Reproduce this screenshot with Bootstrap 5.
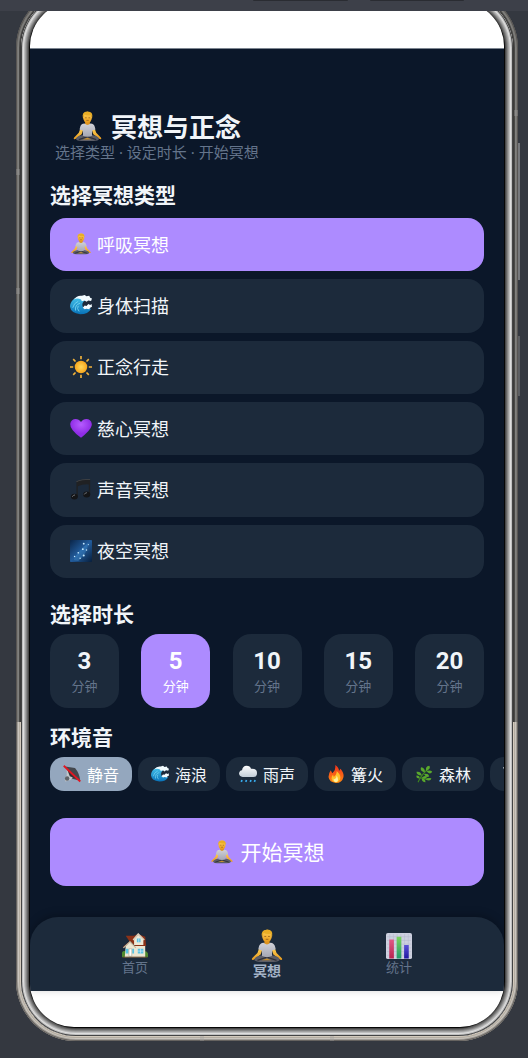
<!DOCTYPE html>
<html lang="zh-CN">
<head>
<meta charset="utf-8">
<meta name="viewport" content="width=device-width, initial-scale=1">
<title>冥想与正念</title>
<link href="https://cdn.jsdelivr.net/npm/bootstrap@5.3.0/dist/css/bootstrap.min.css" rel="stylesheet">
<style>
  :root { --night:#0b1729; --panel:#1c2a3b; --violet:#ad8bff; --ink:#f1f5f9; --muted:#64748b; }
  body { background:#343840; color:var(--ink); font-family:"Noto Sans CJK SC",sans-serif; }
  button, a { font-family:inherit; }
  .toolbar { height:11px; background:#3d4049; padding:0 64px 0 253px; gap:22px; }
  .toolbar span { flex:1; height:1px; background:#2a2c32; border-radius:0 0 4px 4px; }
  .stage { padding:0 10px 17px 16px; }
  /* device shell: outer band, polished ring, glass */
  .shell { margin-top:-23px; padding:5px; border-radius:60px;
    background:linear-gradient(#3b3b3b 0 734px,#d3cabd 734px);
    box-shadow:inset 0 0 0 1px rgba(70,68,66,.65), inset 0 0 0 2px rgba(110,108,104,.45), inset 0 0 0 3px rgba(255,255,255,.3), inset 0 0 0 4px rgba(110,105,98,.3); }
  .ring { padding:9px; border-radius:55px; background:#999;
    box-shadow:inset 0 0 0 1px #444, inset 0 0 0 2px #c0c0c0, inset 0 0 0 3px #dedede, inset 0 0 0 4px #bdbdbd, inset 0 0 0 5px #a0a0a0, inset 0 0 0 6px #848484, inset 0 0 0 7px #666, inset 0 0 0 8px #484848, inset 0 0 0 10px #060606; }
  .glass { border-radius:44px; background:#fff; overflow:hidden; padding:46px 0 36px; }
  .seam { width:4px; height:6px; background:rgba(160,160,160,.35); }
  .seam-l1 { top:181px; left:0; } .seam-l2 { top:300px; left:0; } .seam-r1 { top:122px; right:0; }
  .seam-b1 { bottom:0; left:184px; height:5px; } .seam-b2 { bottom:0; right:184px; height:5px; }
  .side-key { right:-2px; top:155px; width:2px; height:137px; background:#77797d; }
  .side-key-low { top:348px; height:60px; background:#5d5f63; }
  .app-view { background:var(--night); border-top:1px solid #7c8590; padding-top:61px; }
  .app-main { padding:0 20px; }
  .app-title { font-size:26px; line-height:32px; padding-left:22px; gap:8px; font-weight:700; }
  .app-sub { font-family:"Noto Sans","Noto Sans CJK SC",sans-serif; font-size:15px; line-height:20px; padding-left:5px; margin-bottom:19px; color:var(--muted); }
  .sec-title { font-size:21px; line-height:26px; font-weight:700; margin-bottom:8px; }
  .type-list { grid-auto-rows:1fr; gap:8px; min-height:360px; margin:11px 0 22px; }
  .tile { border:0; color:var(--ink); background:var(--panel); }
  .tile.chosen { background:var(--violet); color:#fff; }
  .type-tile { border-radius:16px; padding:0 20px 1px; gap:5px; font-size:18px; }
  .times { margin-bottom:15px; }
  .time-tile { width:69px; height:74px; border-radius:18px; padding:0; }
  .time-tile b { font-family:Roboto,sans-serif; font-size:24px; line-height:30px; }
  .time-tile small { font-size:13px; line-height:20px; color:var(--muted); }
  .time-tile.chosen small { color:#fff; }
  .sounds { gap:6px; margin-right:-20px; overflow-x:auto; scrollbar-width:none; }
  .sounds::-webkit-scrollbar { display:none; }
  .sound-tile { flex:0 0 82px; height:34px; border-radius:14px; padding:0 0 1px; gap:6px; font-size:16px; line-height:20px; }
  .sound-tile.chosen { background:#94a7be; }
  .sound-tile.icon-first { padding-left:13px; }
  .start { height:68px; border-radius:16px; margin:27px 0 31px; padding:0 0 1px; gap:7px; font-size:21px; }
  .tabs { background:var(--panel); border-radius:28px 28px 0 0; height:74px; padding:0 39px; box-shadow:0 -2px 8px rgba(0,0,0,.25); }
  .tabs a { font-size:13px; line-height:15px; color:var(--muted); padding-top:16px; }
  .tabs a.here { font-size:14px; font-weight:700; color:#a5b4c8; padding-top:12px; }
  .i18 { width:18px; height:18px; } .i22 { width:22px; height:22px; } .i24 { width:24px; height:24px; }
  .i26 { width:26px; height:26px; } .i30 { width:31px; height:31px; } .i34 { width:34px; height:34px; }
  svg { flex:none; }
</style>
</head>
<body>
<svg width="0" height="0" class="position-absolute" aria-hidden="true">
  <defs>
    <linearGradient id="gSkin" x2="0" y2="1"><stop stop-color="#ffd35a"/><stop offset="1" stop-color="#e89a1c"/></linearGradient>
    <linearGradient id="gShirt" x2="0" y2="1"><stop stop-color="#d0d1d8"/><stop offset="1" stop-color="#a5a7b2"/></linearGradient>
    <linearGradient id="gWave" x2="0" y2="1"><stop stop-color="#48c6ee"/><stop offset="1" stop-color="#0872b8"/></linearGradient>
    <radialGradient id="gSun"><stop stop-color="#ffd75a"/><stop offset="1" stop-color="#f7a51c"/></radialGradient>
    <radialGradient id="gHeart" cy=".3"><stop stop-color="#b65cff"/><stop offset="1" stop-color="#8f2ce6"/></radialGradient>
    <linearGradient id="gSky" x2="1" y2="1"><stop stop-color="#0a2548"/><stop offset=".5" stop-color="#225c9c"/><stop offset="1" stop-color="#071e3c"/></linearGradient>
    <linearGradient id="gFire" x2="0" y2="1"><stop stop-color="#f0301c"/><stop offset="1" stop-color="#ff8a12"/></linearGradient>
    <linearGradient id="gCloud" x2="0" y2="1"><stop stop-color="#fff"/><stop offset="1" stop-color="#c3cdd8"/></linearGradient>
    <linearGradient id="gRed" x2="0" y2="1"><stop stop-color="#e05a86"/><stop offset="1" stop-color="#b8234f"/></linearGradient>
    <linearGradient id="gGreen" x2="0" y2="1"><stop stop-color="#7ad65a"/><stop offset="1" stop-color="#229a6c"/></linearGradient>
    <linearGradient id="gBlue" x2="0" y2="1"><stop stop-color="#5a50d8"/><stop offset="1" stop-color="#2018a0"/></linearGradient>
  </defs>
  <symbol id="yogi" viewBox="0 0 32 32">
    <path d="M9 17 7 22.500 2 27.500Q1 29.500 3.500 29L10 24 12 18ZM23 17 25 22.500 30 27.500Q31 29.500 28.500 29L22 24 20 18Z" fill="url(#gSkin)"/>
    <path d="M4 29Q4.500 26 10 25L16 24 22 25Q27.500 26 28 29 27 31.300 21 31H11Q5 31.300 4 29Z" fill="#5c5d66"/>
    <path d="M7 29.500L16 26.500 25 29.500" fill="none" stroke="#303138" stroke-width="1.200"/>
    <path d="M11 29.300L16 27.700 20 29.300Z" fill="#c8902c"/>
    <path d="M13.500 10h5v4.500q-2.500 2-5 0Z" fill="#dd9420"/>
    <path d="M13 13Q9 13.200 8.300 17L7.800 19 11.200 20.200 11.300 25.500Q16 27.500 20.700 25.500L20.800 20.200 24.200 19 23.700 17Q23 13.200 19 13 16 16 13 13Z" fill="url(#gShirt)"/>
    <ellipse cx="16" cy="6.500" rx="4.600" ry="5.700" fill="url(#gSkin)"/>
    <path d="M11.200 7Q10 1 15.500.6 22 .2 20.900 7L19.700 4.500Q15 5 13 3.700 12 5 11.200 7Z" fill="#e9ad25"/>
    <path d="M13.500 7h1.700M17 7h1.700M14.800 9.700h2.500" stroke="#8b5715" stroke-width=".7"/>
  </symbol>
  <symbol id="wave" viewBox="0 0 24 24">
    <path d="M0 14C0 7 6 2 14 3l8 3q-7 0-8.500 4.500Q13 15 17 15.500L23 16q-3 6-12 6Q1 21 0 14Z" fill="url(#gWave)"/>
    <path d="M3 15Q4 10 9 8M6 18Q5 12 11 10M10 19Q7 16 9 13" fill="none" stroke="#7bd8f2" stroke-width=".9"/>
    <path d="M4 6Q8 1 13 2l3-1 2 1.500 3-.5 1 2 2 1-1 2.500-3-.5-2 1.500-2-1.500-3 1-1-2Q8 4 4 6ZM14 15l2-2.500 2 .5 2-2 2 1 1.500-1 .5 3-2 1-1 1.500-3-.5-2 .5Z" fill="#f2fbff"/>
  </symbol>
  <symbol id="sun" viewBox="0 0 24 24">
    <path d="M12 0v3.500M12 20.500V24M0 12h3.500M20.500 12H24M3.500 3.500 6 6M18 18l2.500 2.500M20.500 3.500 18 6M6 18l-2.500 2.500" stroke="#f2b33c" stroke-width="1.800"/>
    <circle cx="12" cy="12" r="6.800" fill="url(#gSun)"/>
  </symbol>
  <symbol id="heart" viewBox="0 0 24 24"><path d="M12 22.500Q0 14 .2 7.500C1 1 9 .5 12 5.500 15 .5 23 1 23.800 7.500 24 14 12 22.500 12 22.500Z" fill="url(#gHeart)"/></symbol>
  <symbol id="note" viewBox="0 0 24 24">
    <path d="M7 3.500Q12 1 22 1v17h-1.500V7Q14 6.500 8.500 9v11H7Z" fill="#202123"/><path d="M7 3.500Q12 1 22 1v1Q12 2 7 4.500Z" fill="#45484c"/>
    <ellipse cx="4.800" cy="20.300" rx="3.800" ry="3.200" fill="#141517"/><ellipse cx="18.200" cy="18" rx="3.900" ry="3.200" fill="#141517"/>
    <path d="M2.500 20.500q1-2 3-2M15.500 18q1-2 3-2" stroke="#777b80" fill="none"/>
  </symbol>
  <symbol id="galaxy" viewBox="0 0 24 24">
    <rect width="24" height="24" rx="1" fill="url(#gSky)"/>
    <path d="M4 22Q8 12 20 3 19 15 9 23Z" fill="#3f88c7" opacity=".45"/>
    <g fill="#c5eaff"><circle cx="15" cy="4" r="1"/><circle cx="14" cy="10" r="1"/><circle cx="18" cy="11" r=".8"/><circle cx="9" cy="14" r=".9"/><circle cx="15" cy="17" r="1.100"/><circle cx="11" cy="20" r=".8"/><circle cx="5" cy="18" r=".8"/><circle cx="20" cy="5" r=".6"/></g>
  </symbol>
  <symbol id="mute" viewBox="0 0 24 24">
    <path d="M3 2 16 4Q22 11 23 21L11 18Z" fill="#44474d"/>
    <path d="M5 5 13 17 10 20 3 22Q1 17 5 14Z" fill="#c3c6ca"/><path d="M5 4 17 18 9 15Z" fill="#2f3236"/>
    <circle cx="5.500" cy="18" r="3" fill="#5f6368"/>
    <path d="M1 1 23 22" stroke="#e11722" stroke-width="2.400"/>
  </symbol>
  <symbol id="rain" viewBox="0 0 24 24">
    <path d="M5 16Q0 15 0 11q1-4 4-4Q5 1 10 1q5 0 6 4 8-.5 8 5.500 0 5.500-5 5.500Z" fill="url(#gCloud)"/>
    <path d="M4 20l-1 2.500M10 20l-1 2.500M16 20l-1 2.500M21.500 20l-1 2.500" stroke="#39aef0" stroke-width="2.200"/>
  </symbol>
  <symbol id="fire" viewBox="0 0 24 24">
    <path d="M11 0Q16 3 16 8l2-3q5 6 4 11-2 8-10 8Q3 23 2 16 2 11 5 7l2 4Q12 7 11 0Z" fill="url(#gFire)"/>
    <path d="M13 8Q20 15 17 20q-2 3-5 3-5 0-6-5 0-3 2-5l1 3q4-3 4-8Z" fill="#ffc02b"/>
    <path d="M13 14q4 8-1 9-4-1-3-5l1 1q3-2 3-5Z" fill="#fff0a0"/>
  </symbol>
  <symbol id="herb" viewBox="0 0 24 24">
    <path d="M4 23Q9 12 19 4M7 17Q15 20 21 18" fill="none" stroke="#3f8a1d" stroke-width="1.400"/>
    <path d="M15 8Q13 2 19 1q3 3-4 7ZM13 10Q6 8 8 3q6 1 5 7ZM9 14Q2 14 2 9q6-1 7 5ZM15 8q6-2 8 1-3 5-8-1ZM12 12q6-1 7 3-4 3-7-3ZM9 17q4-4 7-1-2 4-7 1ZM6 18Q1 18 2 14q5 0 4 4ZM14 19q4-3 8-1-2 5-8 1ZM9 18q5 0 5 5-5 0-5-5Z" fill="#59a82c"/>
  </symbol>
  <symbol id="bird" viewBox="0 0 24 24"><path d="M0 3h5q6 0 8 7l9 5-8 6H7Q3 15 3 9Z" fill="#e6ebf1"/></symbol>
  <symbol id="house" viewBox="0 0 28 28">
    <path d="M0 21q2-3 5 0v5H0ZM23 21q3-3 5 1v4h-5Z" fill="#4f8a2f"/>
    <path d="M4 14 9 9 14 15V12h11v14H3Z" fill="#ece6d2"/>
    <path d="M1 15 8 9 4 3h9l4-2 8 3 1 10-12 0-5-5-7 7Z" fill="#8c3218"/>
    <path d="M13 13V7l4.500-5L23 7v6Z" fill="#eee8d6"/><path d="M12 7.500 17.500 1 24 7.500" fill="none" stroke="#d8cfba" stroke-width="1.500"/>
    <path d="M1.500 16 8.500 9.500 15 16" fill="none" stroke="#c9bea5" stroke-width="1.300"/>
    <path d="M16 6h4v4h-4ZM17 17h6v5h-6ZM4 17h3v5H4ZM11 17h2v5h-2Z" fill="#58c4e4"/>
    <path d="M18 6v4M20 17v5M17 19.500h6" stroke="#eef" stroke-width=".6"/>
    <path d="M7.500 17h3v8h-3Z" fill="#fff" stroke="#aaa08c" stroke-width=".6"/><path d="M1 26h26" stroke="#65452c"/>
  </symbol>
  <symbol id="chart" viewBox="0 0 28 28">
    <rect width="28" height="28" rx="2" fill="#cdd0df"/>
    <path d="M4 1v26M8 1v26M12 1v26M16 1v26M20 1v26M24 1v26M1 4h26M1 8h26M1 12h26M1 16h26M1 20h26M1 24h26" stroke="#b3b7ca" stroke-width=".5"/>
    <path d="M3.500 7h5v20.500h-5Z" fill="url(#gRed)"/><path d="M11.500 4h5v23.500h-5Z" fill="url(#gGreen)"/><path d="M19.500 13h5v14.500h-5Z" fill="url(#gBlue)"/>
  </symbol>
</svg>

<div class="toolbar d-flex"><span></span><span></span></div>
<div class="stage overflow-hidden">
  <div class="shell position-relative">
    <i class="seam seam-l1 position-absolute"></i><i class="seam seam-l2 position-absolute"></i><i class="seam seam-r1 position-absolute"></i>
    <i class="seam seam-b1 position-absolute"></i><i class="seam seam-b2 position-absolute"></i>
    <i class="side-key position-absolute"></i><i class="side-key side-key-low position-absolute"></i>
    <div class="ring">
      <div class="glass">
        <div class="app-view">
          <main class="app-main">
            <h1 class="app-title d-flex align-items-center mb-0"><svg class="i30"><use href="#yogi"/></svg>冥想与正念</h1>
            <p class="app-sub">选择类型 · 设定时长 · 开始冥想</p>

            <h2 class="sec-title">选择冥想类型</h2>
            <div class="type-list d-grid">
              <button type="button" class="tile type-tile chosen d-flex align-items-center" aria-pressed="true"><svg class="i22"><use href="#yogi"/></svg>呼吸冥想</button>
              <button type="button" class="tile type-tile d-flex align-items-center"><svg class="i22"><use href="#wave"/></svg>身体扫描</button>
              <button type="button" class="tile type-tile d-flex align-items-center"><svg class="i22"><use href="#sun"/></svg>正念行走</button>
              <button type="button" class="tile type-tile d-flex align-items-center"><svg class="i22"><use href="#heart"/></svg>慈心冥想</button>
              <button type="button" class="tile type-tile d-flex align-items-center"><svg class="i22"><use href="#note"/></svg>声音冥想</button>
              <button type="button" class="tile type-tile d-flex align-items-center"><svg class="i22"><use href="#galaxy"/></svg>夜空冥想</button>
            </div>

            <h2 class="sec-title">选择时长</h2>
            <div class="times d-flex justify-content-between">
              <button type="button" class="tile time-tile d-flex flex-column align-items-center justify-content-center"><b>3</b><small>分钟</small></button>
              <button type="button" class="tile time-tile chosen d-flex flex-column align-items-center justify-content-center" aria-pressed="true"><b>5</b><small>分钟</small></button>
              <button type="button" class="tile time-tile d-flex flex-column align-items-center justify-content-center"><b>10</b><small>分钟</small></button>
              <button type="button" class="tile time-tile d-flex flex-column align-items-center justify-content-center"><b>15</b><small>分钟</small></button>
              <button type="button" class="tile time-tile d-flex flex-column align-items-center justify-content-center"><b>20</b><small>分钟</small></button>
            </div>

            <h2 class="sec-title">环境音</h2>
            <div class="sounds d-flex">
              <button type="button" class="tile sound-tile chosen d-flex align-items-center justify-content-center" aria-pressed="true"><svg class="i18"><use href="#mute"/></svg>静音</button>
              <button type="button" class="tile sound-tile d-flex align-items-center justify-content-center"><svg class="i18"><use href="#wave"/></svg>海浪</button>
              <button type="button" class="tile sound-tile d-flex align-items-center justify-content-center"><svg class="i18"><use href="#rain"/></svg>雨声</button>
              <button type="button" class="tile sound-tile d-flex align-items-center justify-content-center"><svg class="i18"><use href="#fire"/></svg>篝火</button>
              <button type="button" class="tile sound-tile d-flex align-items-center justify-content-center"><svg class="i18"><use href="#herb"/></svg>森林</button>
              <button type="button" class="tile sound-tile icon-first d-flex align-items-center"><svg class="i18"><use href="#bird"/></svg></button>
            </div>

            <button type="button" class="tile chosen start w-100 d-flex align-items-center justify-content-center"><svg class="i24"><use href="#yogi"/></svg>开始冥想</button>
          </main>
          <nav class="tabs d-flex">
            <a href="#" class="col-4 d-flex flex-column align-items-center text-decoration-none"><svg class="i26"><use href="#house"/></svg>首页</a>
            <a href="#" class="here col-4 d-flex flex-column align-items-center text-decoration-none" aria-current="page"><svg class="i34"><use href="#yogi"/></svg>冥想</a>
            <a href="#" class="col-4 d-flex flex-column align-items-center text-decoration-none"><svg class="i26"><use href="#chart"/></svg>统计</a>
          </nav>
        </div>
      </div>
    </div>
  </div>
</div>
<script src="https://cdn.jsdelivr.net/npm/bootstrap@5.3.0/dist/js/bootstrap.bundle.min.js"></script>
</body>
</html>
